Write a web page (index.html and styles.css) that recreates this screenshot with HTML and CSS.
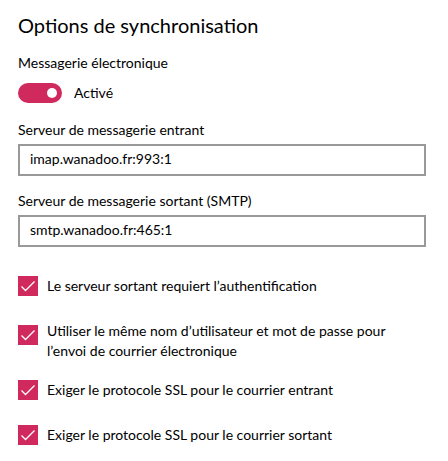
FILE: index.html
```html
<!DOCTYPE html>
<html lang="fr">
<head>
<meta charset="utf-8">
<title>Options de synchronisation</title>
<link rel="stylesheet" href="styles.css">
</head>
<body>
<main class="page">
  <h1 class="title">Options de synchronisation</h1>

  <div class="field-label first">Messagerie électronique</div>
  <div class="toggle-row">
    <span class="toggle"><span class="knob"></span></span>
    <span class="toggle-text">Activé</span>
  </div>

  <div class="field-label server">Serveur de messagerie entrant</div>
  <div class="textbox">imap.wanadoo.fr:993:1</div>

  <div class="field-label server2">Serveur de messagerie sortant (SMTP)</div>
  <div class="textbox">smtp.wanadoo.fr:465:1</div>

  <div class="checks">
    <div class="check">
      <span class="box"><svg viewBox="0 0 20 20" width="20" height="20"><polyline points="3.5,10.5 7.5,14.5 16.5,5.5" fill="none" stroke="#fff" stroke-width="1.3"/></svg></span>
      <span class="check-text">Le serveur sortant requiert l’authentification</span>
    </div>
    <div class="check multi">
      <span class="box"><svg viewBox="0 0 20 20" width="20" height="20"><polyline points="3.5,10.5 7.5,14.5 16.5,5.5" fill="none" stroke="#fff" stroke-width="1.3"/></svg></span>
      <span class="check-text">Utiliser le même nom d’utilisateur et mot de passe pour l’envoi de courrier électronique</span>
    </div>
    <div class="check">
      <span class="box"><svg viewBox="0 0 20 20" width="20" height="20"><polyline points="3.5,10.5 7.5,14.5 16.5,5.5" fill="none" stroke="#fff" stroke-width="1.3"/></svg></span>
      <span class="check-text">Exiger le protocole SSL pour le courrier entrant</span>
    </div>
    <div class="check">
      <span class="box"><svg viewBox="0 0 20 20" width="20" height="20"><polyline points="3.5,10.5 7.5,14.5 16.5,5.5" fill="none" stroke="#fff" stroke-width="1.3"/></svg></span>
      <span class="check-text">Exiger le protocole SSL pour le courrier sortant</span>
    </div>
  </div>
</main>
</body>
</html>
```

FILE: styles.css
```css
html, body {
  margin: 0;
  padding: 0;
  background: #ffffff;
}

body {
  font-family: "Lato", "Open Sans", sans-serif;
  font-size: 14px;
  line-height: 20px;
  color: #000000;
}

.page {
  width: 408px;
  padding: 0 22px 0 18px;
}

.title {
  margin: 11px 0 0;
  font-size: 20px;
  line-height: 28px;
  font-weight: 400;
}

.field-label {
  margin-top: 14px;
}

.field-label.server {
  margin-top: 17px;
}

.field-label.server2 {
  margin-top: 15px;
}

.toggle-row {
  display: flex;
  align-items: center;
  gap: 12px;
  margin-top: 10px;
  height: 20px;
}

.toggle {
  position: relative;
  width: 44px;
  height: 20px;
  border-radius: 10px;
  background: #d0295e;
  flex: none;
}

.knob {
  position: absolute;
  right: 5px;
  top: 5px;
  width: 10px;
  height: 10px;
  border-radius: 50%;
  background: #ffffff;
}

.textbox {
  box-sizing: border-box;
  height: 32px;
  margin-top: 4px;
  border: 2px solid #999999;
  padding: 3px 6px 5px 10px;
}

.checks {
  display: flex;
  flex-direction: column;
  gap: 25px;
  margin-top: 29px;
}

.check {
  display: flex;
  align-items: flex-start;
  gap: 9px;
}

.check.multi {
  margin-bottom: -6px;
}

.box {
  flex: none;
  width: 20px;
  height: 20px;
  background: #d0295e;
}

.box svg {
  display: block;
}

.check.multi .box {
  margin-top: 4px;
}
```
